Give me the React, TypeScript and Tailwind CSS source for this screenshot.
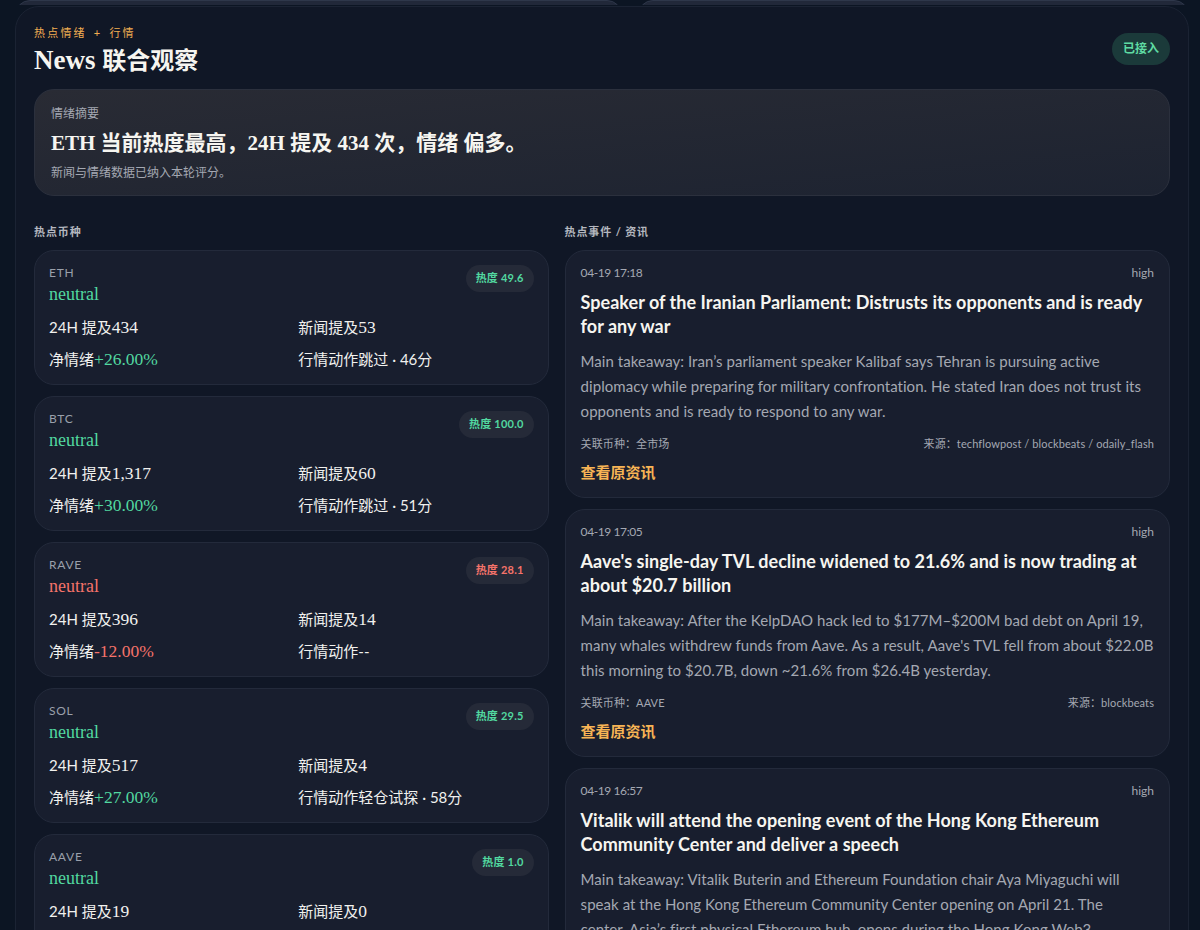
const sans = "font-['Lato','Noto_Sans_CJK_SC',sans-serif]";
const serif = "font-['Liberation_Serif','Noto_Sans_CJK_SC',serif]";

type Coin = {
  sym: string;
  heat: string;
  mention: string;
  news: string;
  net: string;
  action: string;
  down?: boolean;
};

const coins: Coin[] = [
  { sym: "ETH", heat: "热度 49.6", mention: "434", news: "53", net: "+26.00%", action: "跳过 · 46分" },
  { sym: "BTC", heat: "热度 100.0", mention: "1,317", news: "60", net: "+30.00%", action: "跳过 · 51分" },
  { sym: "RAVE", heat: "热度 28.1", mention: "396", news: "14", net: "-12.00%", action: "--", down: true },
  { sym: "SOL", heat: "热度 29.5", mention: "517", news: "4", net: "+27.00%", action: "轻仓试探 · 58分" },
  { sym: "AAVE", heat: "热度 1.0", mention: "19", news: "0", net: "+0.00%", action: "--" },
];

const news = [
  {
    time: "04-19 17:18",
    title: "Speaker of the Iranian Parliament: Distrusts its opponents and is ready for any war",
    body: "Main takeaway: Iran’s parliament speaker Kalibaf says Tehran is pursuing active\ndiplomacy while preparing for military confrontation. He stated Iran does not trust its\nopponents and is ready to respond to any war.",
    coin: "全市场",
    source: "techflowpost / blockbeats / odaily_flash",
  },
  {
    time: "04-19 17:05",
    title: "Aave's single-day TVL decline widened to 21.6% and is now trading at about $20.7 billion",
    body: "Main takeaway: After the KelpDAO hack led to $177M–$200M bad debt on April 19,\nmany whales withdrew funds from Aave. As a result, Aave's TVL fell from about $22.0B\nthis morning to $20.7B, down ~21.6% from $26.4B yesterday.",
    coin: "AAVE",
    source: "blockbeats",
  },
  {
    time: "04-19 16:57",
    title: "Vitalik will attend the opening event of the Hong Kong Ethereum Community Center and deliver a speech",
    body: "Main takeaway: Vitalik Buterin and Ethereum Foundation chair Aya Miyaguchi will\nspeak at the Hong Kong Ethereum Community Center opening on April 21. The\ncenter, Asia’s first physical Ethereum hub, opens during the Hong Kong Web3\nFestival.",
    coin: "ETH",
    source: "blockbeats",
  },
];

function CoinCard({ c }: { c: Coin }) {
  const tone = c.down ? "text-[#f5736a]" : "text-[#52d8a0]";
  const num = `${serif} text-[17.5px]`;
  return (
    <div className="h-[135px] shrink-0 rounded-[20px] border border-[#232a3b] bg-[#181e2e] px-[14px] pt-[14px]">
      <div className="flex items-start justify-between">
        <div>
          <div className="text-[12px] leading-[16px] tracking-[0.06em] text-[#9aa0ab]">{c.sym}</div>
          <div className={`${serif} mt-[1px] text-[18px] leading-[24px] ${tone}`}>neutral</div>
        </div>
        <div className={`flex h-[27px] items-center rounded-full bg-[#252a38] px-[10px] text-[11px] font-bold tracking-[0.02em] ${tone}`}>
          {c.heat}
        </div>
      </div>
      <div className="mt-[10px] grid grid-cols-2 gap-x-[14px] gap-y-[10px] text-[15px] leading-[22px] text-[#f1f1ee]">
        <div>
          24H 提及<span className={num}>{c.mention}</span>
        </div>
        <div>
          新闻提及<span className={num}>{c.news}</span>
        </div>
        <div>
          净情绪<span className={`${num} ${tone}`}>{c.net}</span>
        </div>
        <div>行情动作{c.action}</div>
      </div>
    </div>
  );
}

function NewsCard({ n }: { n: (typeof news)[number] }) {
  return (
    <div className="h-[248px] shrink-0 rounded-[20px] border border-[#232a3b] bg-[#181e2e] px-[15px] pt-[14px]">
      <div className="flex justify-between text-[12px] leading-[16px] text-[#a4a8b2]">
        <span className="tracking-[-0.4px]">{n.time}</span>
        <span>high</span>
      </div>
      <div className="mt-[9px] text-[18px] font-bold leading-[24px] tracking-[0.025px] text-[#f6f5f0]">{n.title}</div>
      <p className="mt-[11px] whitespace-pre-line text-[15px] leading-[25px] tracking-[0.05px] text-[#a4a8b2]">{n.body}</p>
      <div className="mt-[12px] flex justify-between text-[11px] leading-[16px] tracking-[0.1px] text-[#a4a8b2]">
        <span>关联币种：{n.coin}</span>
        <span>来源：{n.source}</span>
      </div>
      <a className="mt-[10px] block text-[15px] font-bold leading-[20px] text-[#f7b455]">查看原资讯</a>
    </div>
  );
}

export default function App() {
  return (
    <div className={`${sans} h-[930px] overflow-hidden bg-[#0c1523] pl-[15px] pr-[11px]`}>
      <div className="grid h-[5px] grid-cols-[1.1fr_1fr] items-end gap-4 overflow-hidden">
        <div className="h-[30px] rounded-[24px] border border-[#2e374a] bg-[#212839]" />
        <div className="h-[30px] rounded-[24px] border border-[#2e374a] bg-[#212839]" />
      </div>
      <section className="mt-px h-[1000px] rounded-[24px] border border-[#1b2333] bg-[#101726] px-[18px] pt-[18px]">
        <div className="flex items-start justify-between">
          <div>
            <div className="text-[11px] leading-[16px] tracking-[0.2em] text-[#f2ae52] [word-spacing:2px]">热点情绪 + 行情</div>
            <h1 className={`${serif} mt-[2px] text-[27px] font-bold leading-[34px] text-[#f6f5f0]`}>
              News <span className="text-[24px]">联合观察</span>
            </h1>
          </div>
          <div className="mt-[8px] flex h-[32px] w-[58px] items-center justify-center rounded-[16px] bg-[#1b3a3a] text-[12px] font-bold text-[#5fdba3]">
            已接入
          </div>
        </div>
        <div className="mt-[11px] h-[107px] rounded-[20px] border border-[#2b303d] bg-gradient-to-br from-[#292b34] to-[#1d2331] px-4 pt-[15px]">
          <div className="text-[12px] leading-[18px] text-[#a4a8b2]">情绪摘要</div>
          <div className={`${serif} mt-[6px] text-[21px] font-bold leading-[28px] text-[#f6f5f0]`}>
            ETH 当前热度最高，24H 提及 434 次，情绪 偏多。
          </div>
          <div className="mt-[7px] text-[12px] leading-[18px] text-[#a4a8b2]">新闻与情绪数据已纳入本轮评分。</div>
        </div>
        <div className="mt-[28px] grid grid-cols-[0.85fr_1fr] gap-4">
          <div className="flex flex-col">
            <div className="mb-[10px] text-[11px] font-bold leading-[16px] tracking-[0.08em] text-[#b4b7bf]">热点币种</div>
            <div className="flex flex-col gap-[11px]">
              {coins.map((c) => (
                <CoinCard key={c.sym} c={c} />
              ))}
            </div>
          </div>
          <div className="flex flex-col">
            <div className="mb-[10px] text-[11px] font-bold leading-[16px] tracking-[0.08em] text-[#b4b7bf]">热点事件 / 资讯</div>
            <div className="flex flex-col gap-[11px]">
              {news.map((n) => (
                <NewsCard key={n.time} n={n} />
              ))}
            </div>
          </div>
        </div>
      </section>
    </div>
  );
}
